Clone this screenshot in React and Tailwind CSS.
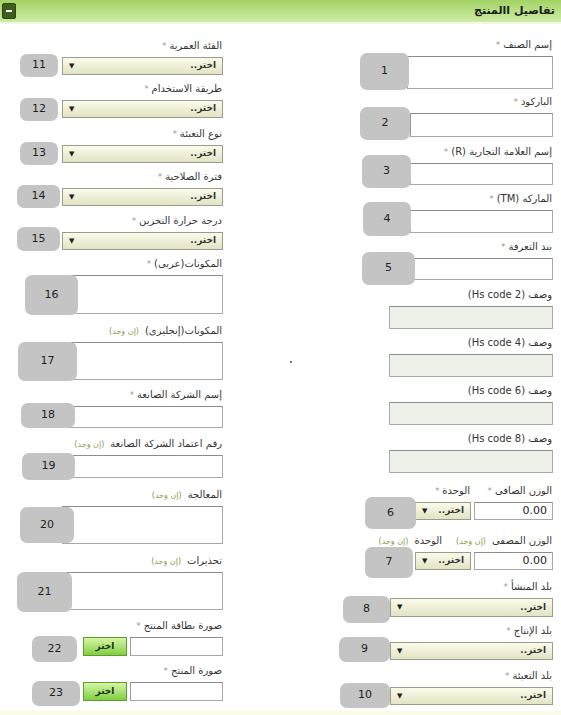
import React from 'react';

const Badge = ({ n, cls }) => (
  <div className={`absolute ${cls} rounded-[7px] bg-[#c4c4c4] flex items-center justify-center text-[11px] text-[#222]`}>
    {n}
  </div>
);

const Req = () => <span className="text-[#999] text-[9px]"> *</span>;
const Opt = () => <span className="text-[#8a9a4a] text-[8px] mr-[6px]">(إن وجد)</span>;

const Label = ({ text, req, opt }) => (
  <div dir="rtl" className="h-[14px] mb-[4px] pr-[1px] text-[10px] leading-[14px] text-[#333] whitespace-nowrap">
    {text}
    {req && <Req />}
    {opt && <Opt />}
  </div>
);

const Box = ({ cls }) => (
  <div className={`${cls} bg-white border border-[#a9a9a9] border-t-[#8c8c8c] border-l-[#999]`} />
);

const Select = ({ cls }) => (
  <div className={`${cls} flex items-center justify-between px-[6px] border border-[#9c9c8c] bg-linear-to-b from-[#fbfbeb] to-[#e3e3c5]`}>
    <span className="text-[7px] text-[#222]">▼</span>
    <span dir="rtl" className="text-[9px] font-bold text-[#333]">اختر..</span>
  </div>
);

const Field = ({ mt, label, req, opt, badge, children }) => (
  <div className={`${mt} flex flex-col items-end`}>
    <Label text={label} req={req} opt={opt} />
    <div className="relative w-full flex justify-end">
      {children}
      {badge}
    </div>
  </div>
);

const FileInput = () => (
  <div className="flex gap-[3px]">
    <div className="w-[44px] h-[19px] flex items-center justify-center border border-[#5f9c2e] bg-linear-to-b from-[#d6f5a4] to-[#7fcf3d] text-[9px] font-bold text-[#1d2d10]">
      اختر
    </div>
    <Box cls="w-[93px] h-[19px]" />
  </div>
);

const hs = (n) => (
  <>
    وصف <span dir="ltr">(Hs code {n})</span>
  </>
);

const WeightRow = ({ mt, label, req, opt, firstCls, badge }) => (
  <div className={`${mt} flex flex-col`}>
    <div dir="rtl" className="h-[14px] mb-[4px] pr-[1px] flex text-[10px] leading-[14px] text-[#333] whitespace-nowrap">
      <span className={firstCls}>
        {label}
        {req && <Req />}
        {opt && <Opt />}
      </span>
      <span>
        الوحدة
        {req && <Req />}
        {opt && <Opt />}
      </span>
    </div>
    <div className="relative flex justify-end gap-[3px]">
      <Select cls="w-[56px] h-[18px]" />
      <div className="w-[79px] h-[18px] bg-white border border-[#a9a9a9] border-t-[#8c8c8c] flex items-center justify-end pr-[5px] text-[11px] text-[#222]">0.00</div>
      {badge}
    </div>
  </div>
);

const App = () => {
  return (
    <div className="w-[561px] h-[715px] flex flex-col bg-white overflow-hidden font-['DejaVu_Sans',sans-serif]">
      <div className="h-[22px] flex items-center justify-between pl-[2px] pr-[6px] bg-linear-to-b from-[#a3d364] to-[#cdeca5]">
        <div className="w-[14px] h-[16px] rounded-[2px] bg-[#3d5e1d] border border-[#2c4512] flex items-center justify-center">
          <div className="w-[6px] h-[2px] bg-white" />
        </div>
        <div dir="rtl" className="text-[11px] font-bold text-[#1c1c1c]">تفاصيل االمنتج</div>
      </div>
      <div className="h-[2px] bg-[#f1f8e4]" />

      <div className="flex-1 flex">
        {/* left column */}
        <div className="w-[224px] pt-[15px] pr-[1px] flex flex-col">
          <Field mt="" label="الفئة العمرية" req badge={<Badge n="11" cls="left-[20px] -top-[3px] w-[38px] h-[23px]" />}>
            <Select cls="w-[161px] h-[18px]" />
          </Field>
          <Field mt="mt-[7px]" label="طريقة الاستخدام" req badge={<Badge n="12" cls="left-[20px] -top-[2px] w-[38px] h-[23px]" />}>
            <Select cls="w-[161px] h-[18px]" />
          </Field>
          <Field mt="mt-[9px]" label="نوع التعبئة" req badge={<Badge n="13" cls="left-[20px] -top-[3px] w-[38px] h-[23px]" />}>
            <Select cls="w-[161px] h-[18px]" />
          </Field>
          <Field mt="mt-[7px]" label="فترة الصلاحية" req badge={<Badge n="14" cls="left-[17px] -top-[3px] w-[43px] h-[23px]" />}>
            <Select cls="w-[161px] h-[18px]" />
          </Field>
          <Field mt="mt-[8px]" label="درجة حرارة التخزين" req badge={<Badge n="15" cls="left-[17px] -top-[5px] w-[43px] h-[24px]" />}>
            <Select cls="w-[161px] h-[18px]" />
          </Field>
          <Field mt="mt-[7px]" label="المكونات(عربى)" req badge={<Badge n="16" cls="left-[25px] top-0 w-[53px] h-[40px]" />}>
            <Box cls="w-[161px] h-[39px]" />
          </Field>
          <Field mt="mt-[10px]" label="المكونات(إنجليزى)" opt badge={<Badge n="17" cls="left-[18px] top-0 w-[59px] h-[39px]" />}>
            <Box cls="w-[161px] h-[38px]" />
          </Field>
          <Field mt="mt-[8px]" label="إسم الشركة الصانعة" req badge={<Badge n="18" cls="left-[21px] -top-[3px] w-[54px] h-[25px]" />}>
            <Box cls="w-[161px] h-[22px]" />
          </Field>
          <Field mt="mt-[9px]" label="رقم اعتماد الشركة الصانعة" opt badge={<Badge n="19" cls="left-[22px] -top-[2px] w-[53px] h-[27px]" />}>
            <Box cls="w-[161px] h-[23px]" />
          </Field>
          <Field mt="mt-[10px]" label="المعالجة" opt badge={<Badge n="20" cls="left-[20px] top-[1px] w-[54px] h-[36px]" />}>
            <Box cls="w-[161px] h-[38px]" />
          </Field>
          <Field mt="mt-[10px]" label="تحذيرات" opt badge={<Badge n="21" cls="left-[17px] top-0 w-[55px] h-[40px]" />}>
            <Box cls="w-[161px] h-[38px]" />
          </Field>
          <Field mt="mt-[9px]" label="صورة بطاقة المنتج" req badge={<Badge n="22" cls="left-[32px] -top-[1px] w-[45px] h-[26px]" />}>
            <FileInput />
          </Field>
          <Field mt="mt-[8px]" label="صورة المنتج" req badge={<Badge n="23" cls="left-[32px] -top-[1px] w-[48px] h-[25px]" />}>
            <FileInput />
          </Field>
        </div>

        {/* middle gap */}
        <div className="w-[115px] pt-[337px] pl-[66px]">
          <div className="w-[2px] h-[2px] bg-[#777]" />
        </div>

        {/* right column */}
        <div className="w-[214px] pt-[14px] flex flex-col">
          <Field mt="" label="إسم الصنف" req badge={<Badge n="1" cls="left-[21px] -top-[3px] w-[49px] h-[37px]" />}>
            <Box cls="w-[146px] h-[33px]" />
          </Field>
          <Field mt="mt-[6px]" label="الباركود" req badge={<Badge n="2" cls="left-[21px] -top-[6px] w-[50px] h-[33px]" />}>
            <Box cls="w-[143px] h-[24px]" />
          </Field>
          <Field mt="mt-[8px]" label="إسم العلامة التجارية (R)" req badge={<Badge n="3" cls="left-[23px] -top-[8px] w-[49px] h-[33px]" />}>
            <Box cls="w-[143px] h-[22px]" />
          </Field>
          <Field mt="mt-[7px]" label="الماركه (TM)" req badge={<Badge n="4" cls="left-[24px] -top-[8px] w-[48px] h-[34px]" />}>
            <Box cls="w-[143px] h-[23px]" />
          </Field>
          <Field mt="mt-[7px]" label="بند التعرفة" req badge={<Badge n="5" cls="left-[23px] -top-[6px] w-[53px] h-[33px]" />}>
            <Box cls="w-[143px] h-[22px]" />
          </Field>
          <Field mt="mt-[8px]" label={hs(2)}>
            <div className="w-[164px] h-[23px] bg-[#edf1ea] border border-[#aaa] border-t-[#8c8c8c]" />
          </Field>
          <Field mt="mt-[7px]" label={hs(4)}>
            <div className="w-[164px] h-[23px] bg-[#edf1ea] border border-[#aaa] border-t-[#8c8c8c]" />
          </Field>
          <Field mt="mt-[7px]" label={hs(6)}>
            <div className="w-[164px] h-[23px] bg-[#edf1ea] border border-[#aaa] border-t-[#8c8c8c]" />
          </Field>
          <Field mt="mt-[7px]" label={hs(8)}>
            <div className="w-[164px] h-[23px] bg-[#edf1ea] border border-[#aaa] border-t-[#8c8c8c]" />
          </Field>

          <WeightRow mt="mt-[11px]" label="الوزن الصافى" req firstCls="min-w-[82px]" badge={<Badge n="6" cls="left-[26px] -top-[5px] w-[51px] h-[32px]" />} />
          <WeightRow mt="mt-[14px]" label="الوزن المصفى" opt firstCls="ml-[14px]" badge={<Badge n="7" cls="left-[26px] -top-[5px] w-[48px] h-[31px]" />} />

          <Field mt="mt-[10px]" label="بلد المنشأ" req badge={<Badge n="8" cls="left-[4px] -top-[2px] w-[47px] h-[27px]" />}>
            <Select cls="w-[163px] h-[19px]" />
          </Field>
          <Field mt="mt-[7px]" label="بلد الإنتاج" req badge={<Badge n="9" cls="left-0 -top-[5px] w-[51px] h-[25px]" />}>
            <Select cls="w-[163px] h-[18px]" />
          </Field>
          <Field mt="mt-[9px]" label="بلد التعبئة" req badge={<Badge n="10" cls="left-[1px] -top-[4px] w-[50px] h-[25px]" />}>
            <Select cls="w-[163px] h-[18px]" />
          </Field>
        </div>
      </div>

      <div className="h-[4px] bg-[#fbfbe6]" />
    </div>
  );
};

export default App;
